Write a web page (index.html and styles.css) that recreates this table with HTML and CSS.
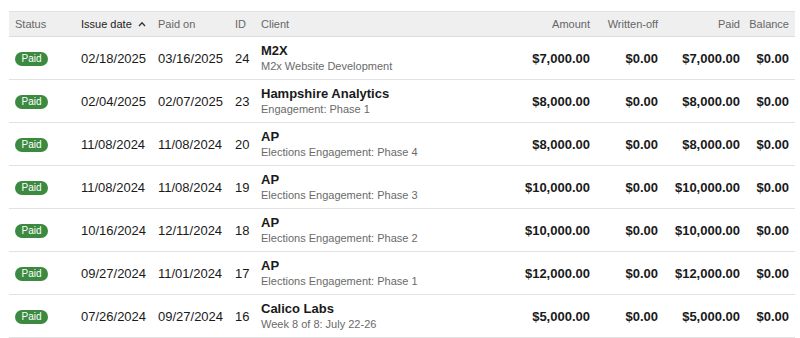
FILE: index.html
```html
<!DOCTYPE html>
<html>
<head>
<meta charset="utf-8">
<link rel="stylesheet" href="styles.css">
</head>
<body>
<table class="invoices">
  <colgroup>
    <col class="c-status"><col class="c-issue"><col class="c-paidon"><col class="c-id"><col class="c-client"><col class="c-amount"><col class="c-written"><col class="c-paid"><col class="c-balance">
  </colgroup>
  <thead>
    <tr>
      <th class="first">Status</th>
      <th class="sorted">Issue date <svg class="chev" width="8" height="6" viewBox="0 0 8 6"><path d="M1 5 L4 1.8 L7 5" fill="none" stroke="#333" stroke-width="1.3"/></svg></th>
      <th>Paid on</th>
      <th>ID</th>
      <th>Client</th>
      <th class="num">Amount</th>
      <th class="num">Written-off</th>
      <th class="num">Paid</th>
      <th class="num last">Balance</th>
    </tr>
  </thead>
  <tbody>
    <tr>
      <td class="first"><span class="badge">Paid</span></td>
      <td>02/18/2025</td><td>03/16/2025</td><td>24</td>
      <td><div class="name">M2X</div><div class="sub">M2x Website Development</div></td>
      <td class="num">$7,000.00</td><td class="num">$0.00</td><td class="num">$7,000.00</td><td class="num last">$0.00</td>
    </tr>
    <tr>
      <td class="first"><span class="badge">Paid</span></td>
      <td>02/04/2025</td><td>02/07/2025</td><td>23</td>
      <td><div class="name">Hampshire Analytics</div><div class="sub">Engagement: Phase 1</div></td>
      <td class="num">$8,000.00</td><td class="num">$0.00</td><td class="num">$8,000.00</td><td class="num last">$0.00</td>
    </tr>
    <tr>
      <td class="first"><span class="badge">Paid</span></td>
      <td>11/08/2024</td><td>11/08/2024</td><td>20</td>
      <td><div class="name">AP</div><div class="sub">Elections Engagement: Phase 4</div></td>
      <td class="num">$8,000.00</td><td class="num">$0.00</td><td class="num">$8,000.00</td><td class="num last">$0.00</td>
    </tr>
    <tr>
      <td class="first"><span class="badge">Paid</span></td>
      <td>11/08/2024</td><td>11/08/2024</td><td>19</td>
      <td><div class="name">AP</div><div class="sub">Elections Engagement: Phase 3</div></td>
      <td class="num">$10,000.00</td><td class="num">$0.00</td><td class="num">$10,000.00</td><td class="num last">$0.00</td>
    </tr>
    <tr>
      <td class="first"><span class="badge">Paid</span></td>
      <td>10/16/2024</td><td>12/11/2024</td><td>18</td>
      <td><div class="name">AP</div><div class="sub">Elections Engagement: Phase 2</div></td>
      <td class="num">$10,000.00</td><td class="num">$0.00</td><td class="num">$10,000.00</td><td class="num last">$0.00</td>
    </tr>
    <tr>
      <td class="first"><span class="badge">Paid</span></td>
      <td>09/27/2024</td><td>11/01/2024</td><td>17</td>
      <td><div class="name">AP</div><div class="sub">Elections Engagement: Phase 1</div></td>
      <td class="num">$12,000.00</td><td class="num">$0.00</td><td class="num">$12,000.00</td><td class="num last">$0.00</td>
    </tr>
    <tr>
      <td class="first"><span class="badge">Paid</span></td>
      <td>07/26/2024</td><td>09/27/2024</td><td>16</td>
      <td><div class="name">Calico Labs</div><div class="sub">Week 8 of 8: July 22-26</div></td>
      <td class="num">$5,000.00</td><td class="num">$0.00</td><td class="num">$5,000.00</td><td class="num last">$0.00</td>
    </tr>
  </tbody>
</table>
</body>
</html>
```
FILE: styles.css
```css
html, body {
  margin: 0;
  padding: 0;
  background: #fff;
}
body {
  padding: 11px 0 0 9px;
  font-family: "Liberation Sans", Arial, sans-serif;
  color: #1a1a1a;
}
.invoices {
  width: 786px;
  border-collapse: collapse;
  table-layout: fixed;
}
.c-status { width: 72px; }
.c-issue { width: 77px; }
.c-paidon { width: 77px; }
.c-id { width: 26px; }
.c-client { width: 249px; }
.c-amount { width: 80px; }
.c-written { width: 68px; }
.c-paid { width: 82px; }
.c-balance { width: 55px; }

th, td {
  padding: 0;
  text-align: left;
  white-space: nowrap;
}
thead th {
  height: 24px;
  background: #efefef;
  border-top: 1px solid #e0e0e0;
  border-bottom: 1px solid #dcdcdc;
  font-size: 11px;
  font-weight: normal;
  color: #666;
}
thead th.sorted {
  color: #222;
}
.chev {
  margin-left: 3px;
  vertical-align: 1px;
}
tbody td {
  height: 42px;
  border-bottom: 1px solid #e2e2e2;
  font-size: 13px;
  color: #1a1a1a;
  vertical-align: middle;
}
.first { padding-left: 6px; }
.num { text-align: right; }
.last { padding-right: 6px; }
tbody td.num { font-weight: bold; }
.badge {
  display: inline-block;
  width: 33px;
  height: 14px;
  line-height: 14px;
  border-radius: 7px;
  background: #3b8a3f;
  color: #fff;
  font-size: 10px;
  text-align: center;
  vertical-align: middle;
}
.name {
  font-weight: bold;
  font-size: 13px;
  line-height: 15px;
}
.sub {
  font-size: 11px;
  color: #6a6a6a;
  line-height: 16px;
}
```
